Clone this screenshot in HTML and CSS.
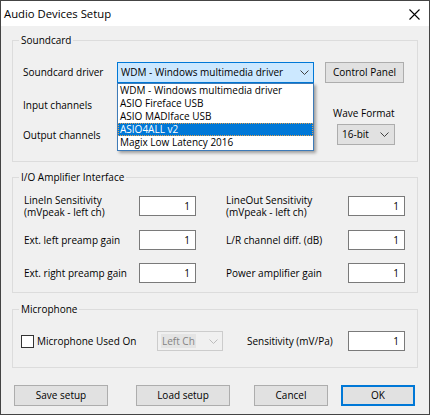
FILE: index.html
```html
<!DOCTYPE html>
<html>
<head>
<meta charset="utf-8">
<title>Audio Devices Setup</title>
<link rel="stylesheet" href="styles.css">
</head>
<body>
<div class="window">
  <div class="titlebar">
    <span class="title">Audio Devices Setup</span>
    <svg class="close" width="11" height="11" viewBox="0 0 11 11"><path d="M0.5 0.5 L10.5 10.5 M10.5 0.5 L0.5 10.5" stroke="#000" stroke-width="1.1" fill="none"/></svg>
  </div>
  <div class="client">
    <fieldset class="group g-sound">
      <legend>Soundcard</legend>
      <div class="sound-body">
        <div class="s-row1">
          <span class="lbl-driver">Soundcard driver</span>
          <div class="combo-wrap">
            <div class="combo combo-focus">
              <span class="combo-text">WDM - Windows multimedia driver</span>
              <svg class="chev" width="9" height="5" viewBox="0 0 9 5"><path d="M0.5 0.5 L4.5 4.5 L8.5 0.5" stroke="#404040" stroke-width="1" fill="none"/></svg>
            </div>
            <ul class="droplist">
              <li>WDM - Windows multimedia driver</li>
              <li>ASIO Fireface USB</li>
              <li>ASIO MADIface USB</li>
              <li class="sel">ASIO4ALL v2</li>
              <li>Magix Low Latency 2016</li>
            </ul>
          </div>
          <div class="btn btn-cp">Control Panel</div>
        </div>
        <div class="s-row2">
          <div class="chan-col">
            <div class="chan-lbl">Input channels</div>
            <div class="chan-lbl chan-out">Output channels</div>
          </div>
          <div class="wave-col">
            <div class="wave-lbl">Wave Format</div>
            <div class="combo combo-wave">
              <span class="combo-text">16-bit</span>
              <svg class="chev" width="9" height="5" viewBox="0 0 9 5"><path d="M0.5 0.5 L4.5 4.5 L8.5 0.5" stroke="#404040" stroke-width="1" fill="none"/></svg>
            </div>
          </div>
        </div>
      </div>
    </fieldset>

    <fieldset class="group g-io">
      <legend>I/O Amplifier Interface</legend>
      <div class="io-body">
        <div class="io-row io-r1">
          <div class="io-lbl-l">LineIn Sensitivity<br>(mVpeak - left ch)</div>
          <div class="edit">1</div>
          <div class="io-lbl-r">LineOut Sensitivity<br>(mVpeak - left ch)</div>
          <div class="edit">1</div>
        </div>
        <div class="io-row io-r2">
          <div class="io-lbl-l">Ext. left preamp gain</div>
          <div class="edit">1</div>
          <div class="io-lbl-r">L/R channel diff. (dB)</div>
          <div class="edit">1</div>
        </div>
        <div class="io-row io-r3">
          <div class="io-lbl-l">Ext. right preamp gain</div>
          <div class="edit">1</div>
          <div class="io-lbl-r">Power amplifier gain</div>
          <div class="edit">1</div>
        </div>
      </div>
    </fieldset>

    <fieldset class="group g-mic">
      <legend>Microphone</legend>
      <div class="mic-body">
        <div class="checkbox"></div>
        <span class="mic-lbl">Microphone Used On</span>
        <div class="combo combo-dis">
          <span class="combo-text dis-text">Left Ch</span>
          <svg class="chev" width="9" height="5" viewBox="0 0 9 5"><path d="M0.5 0.5 L4.5 4.5 L8.5 0.5" stroke="#bcbcbc" stroke-width="1" fill="none"/></svg>
        </div>
        <span class="sens-lbl">Sensitivity (mV/Pa)</span>
        <div class="edit">1</div>
      </div>
    </fieldset>

    <div class="buttons">
      <div class="btn btn-save">Save setup</div>
      <div class="btn btn-load">Load setup</div>
      <div class="btn btn-cancel">Cancel</div>
      <div class="btn btn-ok">OK</div>
    </div>
  </div>
</div>
</body>
</html>
```

FILE: styles.css
```css
* { box-sizing: border-box; }
html, body { margin: 0; padding: 0; }
body {
  width: 430px;
  height: 415px;
  overflow: hidden;
  font-family: "Open Sans", "Noto Sans", sans-serif;
  font-size: 10px;
  line-height: 13px;
  color: #000;
}
.window {
  width: 430px;
  height: 415px;
  border: 1px solid #444;
  background: #fff;
  display: flex;
  flex-direction: column;
}
.titlebar {
  height: 25px;
  flex: none;
  display: flex;
  align-items: center;
  justify-content: space-between;
  padding: 0 9px 0 3px;
  background: #fff;
}
.title {
  font-size: 11.3px;
  line-height: 16px;
  margin-top: 0px;
}
.close { display: block; margin-top: 1px; }
.client {
  flex: 1;
  background: #f0f0f0;
  padding: 0 11px;
}
.group {
  margin: 0;
  padding: 0;
  border: 1px solid #dcdcdc;
  min-width: 0;
}
.group legend {
  margin-left: 6px;
  padding: 0 2px;
  font-size: 10px;
  line-height: 14px;
}
.g-sound { margin-top: 7px; }
.g-io { margin-top: 8px; }
.g-mic { margin-top: 9px; }

/* Soundcard */
.sound-body { padding: 15px 10px 16px 10px; }
.s-row1 {
  display: flex;
  align-items: center;
  height: 21px;
}
.lbl-driver { width: 94px; flex: none; }
.combo-wrap { position: relative; width: 197px; height: 21px; flex: none; }
.combo {
  display: flex;
  align-items: center;
  justify-content: space-between;
  height: 21px;
  border: 1px solid #adadad;
  background: #e1e1e1;
  padding: 0 4px 0 3px;
}
.combo-focus {
  border-color: #0078d7;
  background: #cce8ff;
}
.chev { display: block; flex: none; }
.droplist {
  position: absolute;
  left: 0;
  top: 21px;
  width: 197px;
  margin: 0;
  padding: 0 0 1px 0;
  list-style: none;
  background: #fff;
  border: 1px solid #3e7bb8;
  box-shadow: 2px 2px 3px rgba(0, 0, 0, 0.35);
  z-index: 2;
}
.droplist li {
  height: 13px;
  line-height: 13px;
  padding-left: 2px;
  white-space: nowrap;
}
.droplist li.sel {
  background: #0078d7;
  color: #fff;
  outline: 1px dotted #e0a050;
  outline-offset: -1px;
}
.btn {
  display: flex;
  align-items: center;
  justify-content: center;
  height: 21px;
  border: 1px solid #adadad;
  background: #e1e1e1;
  flex: none;
}
.btn-cp { width: 79px; margin-left: 11px; }
.s-row2 {
  display: flex;
  align-items: flex-start;
}
.chan-col { width: 310px; flex: none; padding-top: 14px; }
.chan-lbl { line-height: 16px; }
.chan-out { margin-top: 14px; }
.wave-col { padding-top: 22px; }
.wave-lbl { line-height: 16px; }
.combo-wave {
  width: 58px;
  margin-top: 3px;
  margin-left: 4px;
  padding: 0 5px 0 4px;
}

/* I/O */
.io-body { padding: 9px 10px 9px 11px; }
.io-row {
  display: flex;
  align-items: center;
  height: 20px;
}
.io-r1 { height: 26px; }
.io-r2 { margin-top: 11px; }
.io-r3 { margin-top: 13px; }
.io-lbl-l { width: 115px; flex: none; line-height: 12.5px; }
.io-lbl-r { width: 122px; flex: none; margin-left: 30px; line-height: 12.5px; }
.edit {
  width: 57px;
  height: 20px;
  flex: none;
  border: 1px solid #7a7a7a;
  background: #fff;
  text-align: right;
  padding-right: 5px;
  line-height: 18px;
}

/* Microphone */
.mic-body {
  display: flex;
  align-items: center;
  height: 51px;
  padding: 15px 10px 16px 8px;
  box-sizing: border-box;
  height: auto;
}
.mic-body > * { flex: none; }
.checkbox {
  width: 13px;
  height: 13px;
  border: 1px solid #333;
  background: #fff;
}
.mic-lbl { width: 120px; margin-left: 3px; }
.combo-dis {
  width: 66px;
  height: 20px;
  border-color: #cccccc;
  background: #f0f0f0;
  padding: 0 4px 0 3px;
}
.dis-text {
  background: #e4e4e4;
  color: #838383;
  padding: 0 1px;
  line-height: 14px;
}
.sens-lbl { width: 101px; margin-left: 24px; }
.mic-body .edit { height: 20px; }

/* Buttons */
.buttons {
  display: flex;
  margin-top: 17px;
  padding-left: 2px;
}
.btn-save { width: 94px; }
.btn-load { width: 94px; margin-left: 28px; }
.btn-cancel { width: 74px; margin-left: 24px; }
.btn-ok { width: 74px; margin-left: 13px; border: 2px solid #0078d7; }
```
